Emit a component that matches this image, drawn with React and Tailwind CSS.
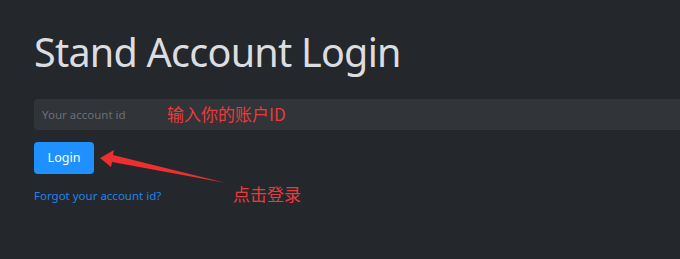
import React from "react";

export default function App() {
  return (
    <div className="relative w-[680px] h-[259px] overflow-hidden bg-[#24272c]" style={{ fontFamily: '"Noto Sans", "Open Sans", sans-serif' }}>
      <div className="pl-[34px] pt-[28px] flex flex-col">
        <h1 className="text-[39.5px] leading-[48px] text-[#dcdde0] font-normal tracking-[-0.75px]">Stand Account Login</h1>
        <div className="mt-[23px] w-[700px] h-[31px] rounded-[4px] bg-[#313439] flex items-center pl-[8px]">
          <span className="text-[11.5px] text-[#6b6f76]">Your account id</span>
        </div>
        <button className="mt-[12px] w-[60px] h-[32px] rounded-[4px] bg-[#1e90ff] text-white text-[12.5px] flex items-center justify-center">Login</button>
        <a className="mt-[13px] text-[11.5px] leading-[18px] text-[#1f84ee]">Forgot your account id?</a>
      </div>

      <span className="absolute left-[167px] top-[103px] text-[17px] leading-[22px] text-[#e83b3b]" style={{ fontFamily: '"Noto Sans CJK SC", "Noto Sans", sans-serif' }}>输入你的账户ID</span>
      <span className="absolute left-[233px] top-[183px] text-[17px] leading-[22px] text-[#e83b3b]" style={{ fontFamily: '"Noto Sans CJK SC", sans-serif' }}>点击登录</span>

      <svg className="absolute left-0 top-0" width="680" height="259" viewBox="0 0 680 259">
        <polygon points="100,158 114,150 113,155 226,183 112,162 111,167" fill="#ee2f2f" />
      </svg>
    </div>
  );
}
